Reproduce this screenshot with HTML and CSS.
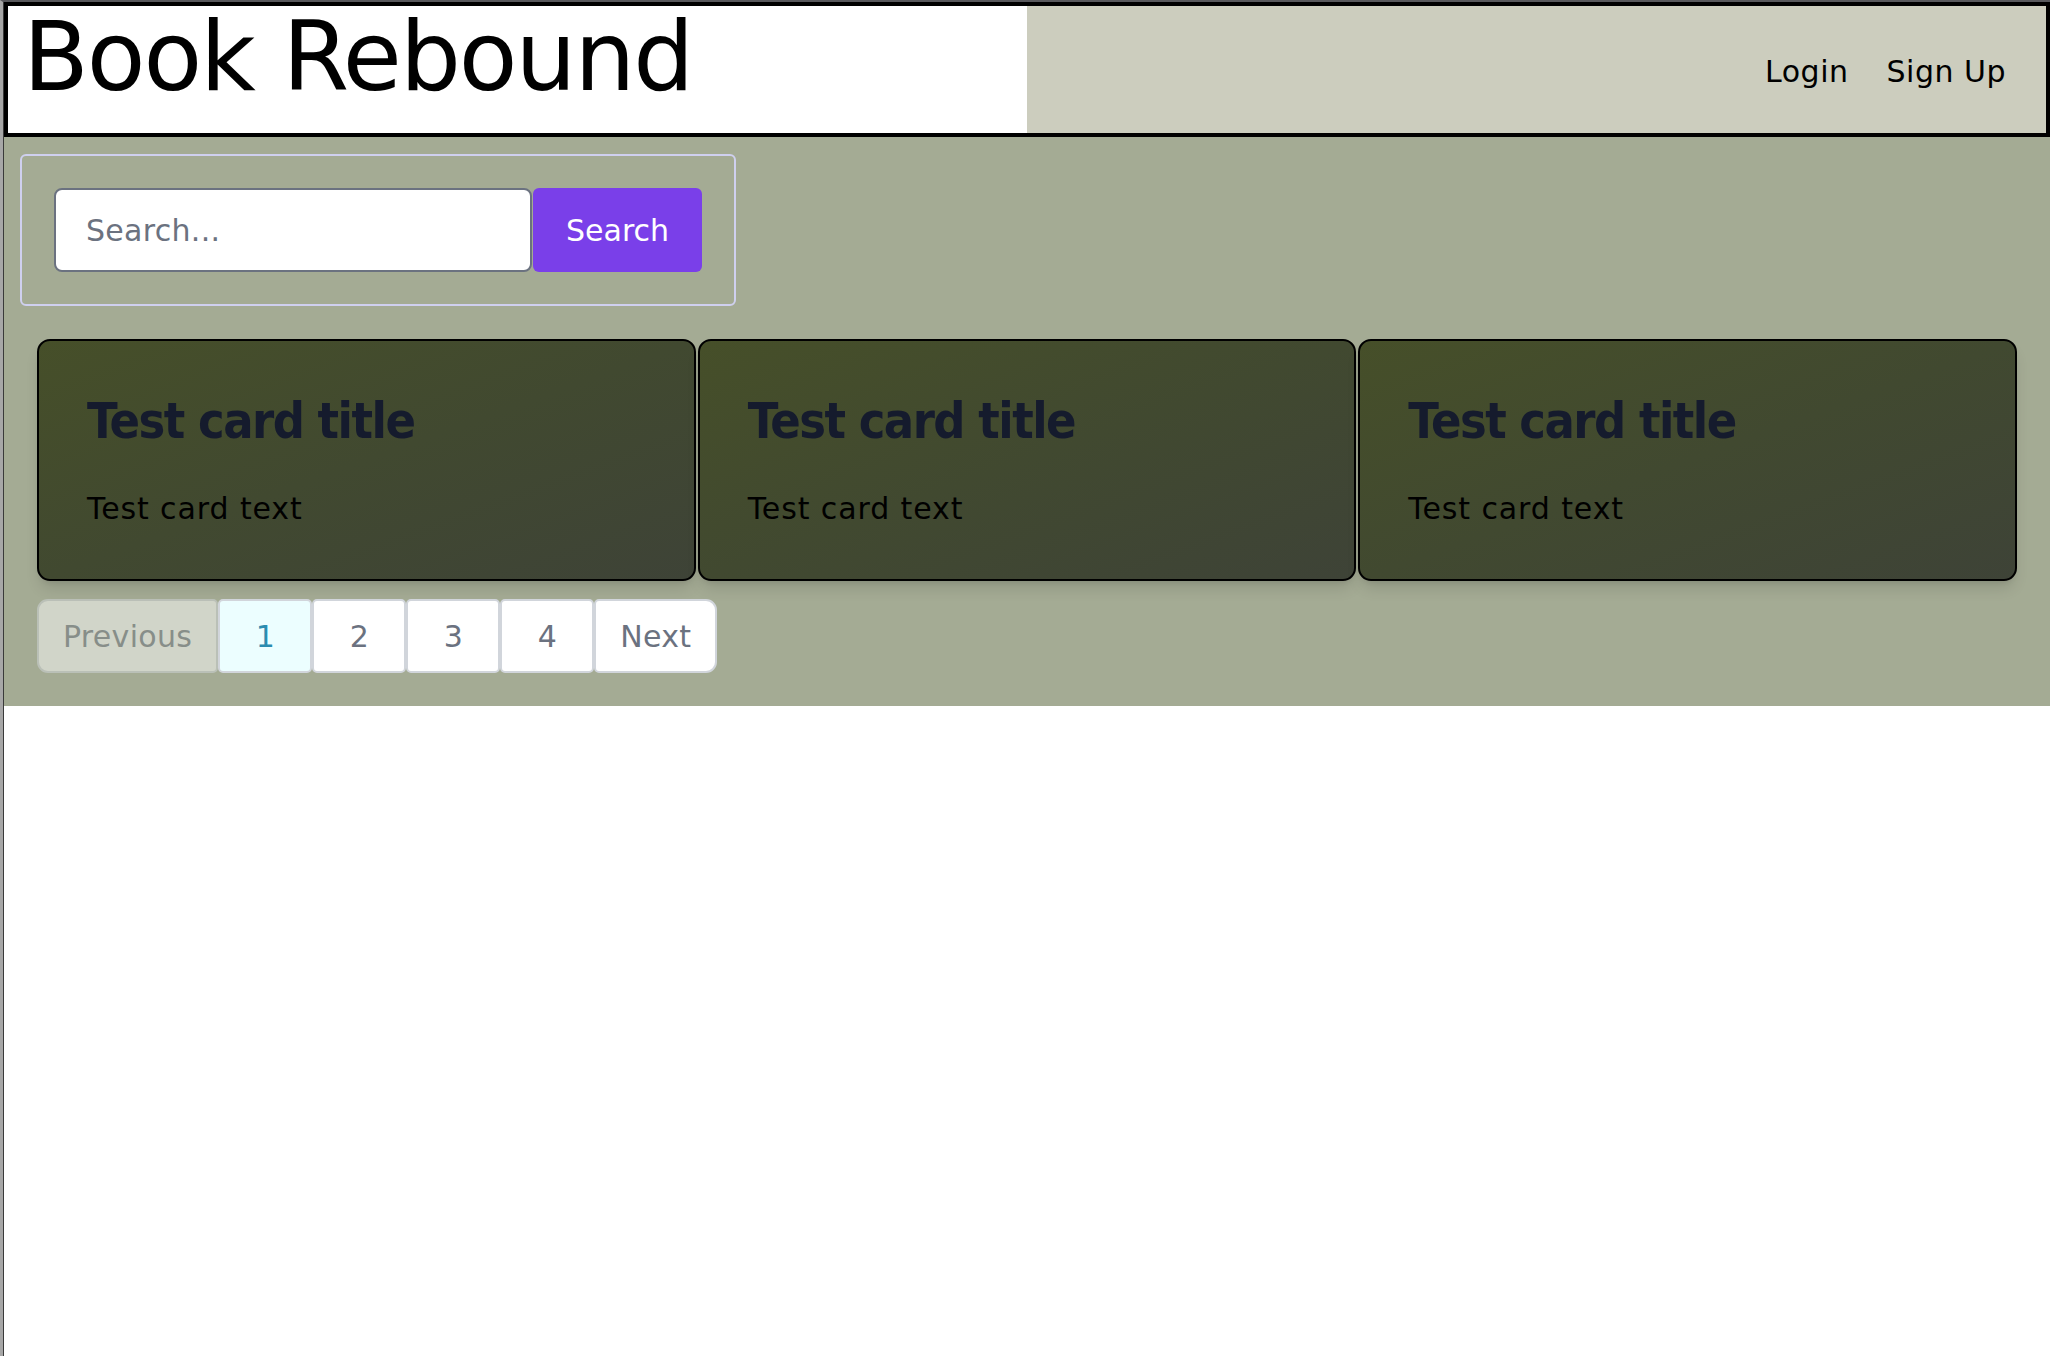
FILE: index.html
```html
<!DOCTYPE html>
<html lang="en">
<head>
<meta charset="utf-8">
<title>Book Rebound</title>
<link rel="stylesheet" href="styles.css">
</head>
<body>
<div class="window">
  <div class="page">
    <header class="site-header">
      <div class="brand"><h1 class="brand-title">Book Rebound</h1></div>
      <nav class="nav">
        <a class="nav-link" href="#">Login</a>
        <a class="nav-link" href="#">Sign Up</a>
      </nav>
    </header>
    <main class="main">
      <form class="search-box">
        <input class="search-input" type="text" placeholder="Search...">
        <button class="search-btn" type="button">Search</button>
      </form>
      <section class="results">
        <div class="card-grid">
          <article class="card">
            <h2 class="card-title">Test card title</h2>
            <p class="card-text">Test card text</p>
          </article>
          <article class="card">
            <h2 class="card-title">Test card title</h2>
            <p class="card-text">Test card text</p>
          </article>
          <article class="card">
            <h2 class="card-title">Test card title</h2>
            <p class="card-text">Test card text</p>
          </article>
        </div>
        <nav class="pager">
          <span class="page-item page-edge page-prev is-disabled">Previous</span>
          <span class="page-item page-num is-active">1</span>
          <span class="page-item page-num">2</span>
          <span class="page-item page-num">3</span>
          <span class="page-item page-num">4</span>
          <span class="page-item page-edge page-next">Next</span>
        </nav>
      </section>
    </main>
  </div>
</div>
</body>
</html>
```

FILE: styles.css
```css
* { box-sizing: border-box; }

html, body {
  margin: 0;
  padding: 0;
  background: #ffffff;
  font-family: "DejaVu Sans", "Liberation Sans", sans-serif;
}

.window {
  min-height: 100vh;
  border-top: 2px solid #58585c;
  border-left: 3px solid #a7a7a7;
}

.page {
  min-height: calc(100vh - 2px);
  border-left: 1px solid #3a3a3a;
  background: #ffffff;
}

/* Header */
.site-header {
  display: grid;
  grid-template-columns: 1fr 1fr;
  border: 4px solid #000000;
}

.brand {
  background: #ffffff;
  padding: 3px 16px 28px 15px;
}

.brand-title {
  margin: 0;
  font-size: 96px;
  line-height: 96px;
  font-weight: 400;
  letter-spacing: -2px;
  color: #000000;
}

.nav {
  background: #cccdbe;
  display: flex;
  justify-content: flex-end;
  align-items: center;
  padding: 4px 20px 0 0;
}

.nav-link {
  font-size: 30px;
  line-height: 45px;
  padding: 0 19px;
  letter-spacing: 0.5px;
  color: #000000;
  text-decoration: none;
}

.nav-link:last-child {
  padding-right: 20px;
}

/* Main */
.main {
  background: #a4ab94;
  padding: 17px 16px 16px 16px;
}

.search-box {
  display: inline-flex;
  align-items: stretch;
  gap: 1px;
  margin: 0;
  padding: 32px;
  border: 2px solid #cfd0ef;
  border-radius: 6px;
  vertical-align: top;
}

.search-input {
  width: 478px;
  height: 84px;
  margin: 0;
  padding: 0 30px;
  border: 2px solid #6b7280;
  border-radius: 8px;
  background: #ffffff;
  font-family: "DejaVu Sans", "Liberation Sans", sans-serif;
  font-size: 30px;
  letter-spacing: 0.3px;
  color: #111827;
  outline: none;
}

.search-input::placeholder {
  color: #6b7280;
}

.search-btn {
  height: 84px;
  margin: 0;
  padding: 0 33px;
  border: 0;
  border-radius: 6px;
  background: #7a3fe9;
  color: #ffffff;
  font-family: "DejaVu Sans", "Liberation Sans", sans-serif;
  font-size: 30px;
  cursor: pointer;
}

.results {
  padding: 33px 17px 17px 17px;
}

.card-grid {
  display: grid;
  grid-template-columns: repeat(3, 1fr);
  gap: 2px;
}

.card {
  height: 242px;
  padding: 48px;
  border: 2px solid #000000;
  border-radius: 13px;
  background: linear-gradient(160deg, #464f29 0%, #414930 50%, #3e4337 100%);
  box-shadow: 0 10px 15px -3px rgba(0, 0, 0, 0.12), 0 4px 6px -4px rgba(0, 0, 0, 0.12);
}

.card-title {
  margin: 2px 0 0 0;
  font-family: "DejaVu Sans Condensed", "DejaVu Sans", sans-serif;
  font-stretch: condensed;
  font-weight: 700;
  font-size: 50px;
  line-height: 60px;
  letter-spacing: -1.5px;
  color: #151b2d;
}

.card-text {
  margin: 35px 0 0 0;
  font-size: 30px;
  line-height: 45px;
  letter-spacing: 0.9px;
  color: #000000;
}

/* Pagination */
.pager {
  display: flex;
  margin-top: 18px;
}

.page-item {
  height: 74px;
  display: flex;
  align-items: center;
  justify-content: center;
  border: 2px solid #d1d5db;
  border-radius: 5px;
  background: #ffffff;
  color: #6b7280;
  font-size: 30px;
  line-height: 45px;
}

.page-edge {
  padding: 0 24px;
  letter-spacing: 0.3px;
}

.page-num {
  width: 94px;
}

.page-prev {
  border-radius: 11px 5px 5px 11px;
}

.page-next {
  border-radius: 5px 11px 11px 5px;
}

.is-disabled {
  opacity: 0.5;
}

.is-active {
  background: #ecfeff;
  color: #2b8cb0;
}
```
